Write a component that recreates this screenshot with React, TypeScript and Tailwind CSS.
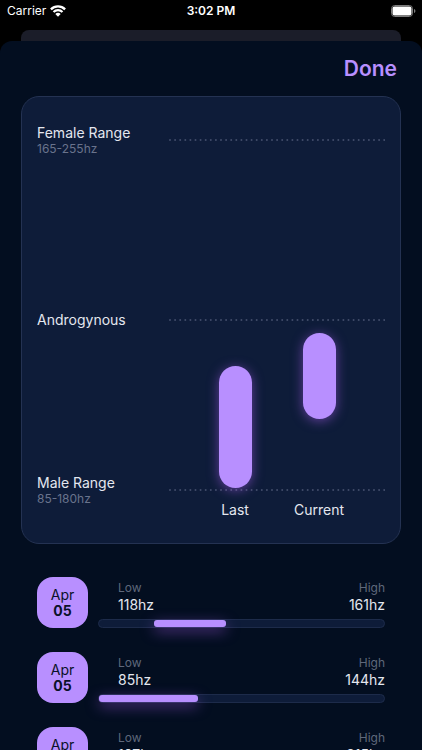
type Range = { low: number; high: number };
type Entry = Range & { month: string; day: string };

const entries: Entry[] = [
  { month: "Apr", day: "05", low: 118, high: 161 },
  { month: "Apr", day: "05", low: 85, high: 144 },
  { month: "Apr", day: "05", low: 107, high: 215 },
];

const MIN_HZ = 85;
const MAX_HZ = 255;

function StatusBar() {
  return (
    <header className="relative flex h-[22px] shrink-0 items-center justify-between pr-[6px] pl-[7px] text-xs leading-4 text-white">
      <div className="flex items-center gap-1">
        <span>Carrier</span>
        <svg width="16" height="12" viewBox="0 0 16 12" fill="none" aria-label="Wi-Fi">
          <path d="M.9 4.300a10.200 10.200 0 0 1 14.200 0" stroke="white" strokeWidth="2.400" />
          <path d="M3.500 7a6.400 6.400 0 0 1 9 0" stroke="white" strokeWidth="2.200" />
          <path d="M8 11.800 5.300 9.100a3.800 3.800 0 0 1 5.400 0Z" fill="white" />
        </svg>
      </div>
      <time className="absolute inset-x-0 text-center font-semibold">3:02 PM</time>
      <svg width="25" height="12" viewBox="0 0 25 12" aria-label="Battery full">
        <rect x="0.5" y="0.5" width="21" height="11" rx="3.2" fill="none" stroke="#7c7c7c" />
        <rect x="1.500" y="1.500" width="19" height="9" rx="2" fill="white" />
        <path d="M23 4v4c.8-.3 1.400-1.100 1.400-2S23.800 4.300 23 4Z" fill="#7c7c7c" />
      </svg>
    </header>
  );
}

function DottedLine() {
  return (
    <svg className="h-[3px] min-w-0 flex-1" aria-hidden="true">
      <line x1="2" y1="1" x2="100%" y2="1" stroke="#414c6a" strokeWidth="2" strokeLinecap="round" strokeDasharray="0 5.1" />
    </svg>
  );
}

function RangeRow({ title, detail }: { title: string; detail?: string }) {
  return (
    <div className="flex items-center">
      <div className="w-[131px] shrink-0">
        <div className="text-sm leading-4 text-[#e4e7ef]">{title}</div>
        {detail && <div className="text-xs leading-[15px] text-[#69738c]">{detail}</div>}
      </div>
      <DottedLine />
    </div>
  );
}

function Bar({ label, top, height }: { label: string; top: number; height: number }) {
  return (
    <div className="relative flex w-[84px] flex-col items-center justify-end">
      <div
        className="absolute w-[33px] rounded-full bg-[#b88fff] shadow-[0_2px_12px_rgba(184,100,255,0.5)]"
        style={{ top, height }}
      />
      <span className="text-sm leading-5 text-[#e4e7ef]">{label}</span>
    </div>
  );
}

function RangeChart() {
  return (
    <section className="relative h-[448px] shrink-0 rounded-[18px] border border-[#243252] bg-[#0e1c39] px-[15px] pt-7">
      <RangeRow title="Female Range" detail="165-255hz" />
      <div className="h-[156px]" />
      <RangeRow title="Androgynous" />
      <div className="h-[147px]" />
      <RangeRow title="Male Range" detail="85-180hz" />
      <div className="absolute top-0 right-[15px] bottom-[23px] left-[147px] flex justify-center">
        <Bar label="Last" top={269} height={122} />
        <Bar label="Current" top={236} height={86} />
      </div>
    </section>
  );
}

function EntryRow({ month, day, low, high }: Entry) {
  const span = MAX_HZ - MIN_HZ;
  const left = ((low - MIN_HZ) / span) * 100;
  const width = ((high - low) / span) * 100;
  return (
    <li className="flex gap-[10px]">
      <div className="flex size-[51px] shrink-0 flex-col items-center justify-center rounded-2xl bg-[#b88fff] text-sm leading-4 text-[#0a1128]">
        <span>{month}</span>
        <span className="font-bold">{day}</span>
      </div>
      <div className="min-w-0 flex-1 pt-[3px]">
        <dl className="flex justify-between pl-5">
          <div>
            <dt className="text-xs leading-[15px] text-[#5f687b]">Low</dt>
            <dd className="text-sm leading-5 text-[#e4e7ef]">{low}hz</dd>
          </div>
          <div className="text-right">
            <dt className="text-xs leading-[15px] text-[#5f687b]">High</dt>
            <dd className="text-sm leading-5 text-[#e4e7ef]">{high}hz</dd>
          </div>
        </dl>
        <div className="mt-1 h-[9px] rounded-full border border-[#1d2b4a] bg-[#0e1c39]">
          <div
            className="h-[7px] rounded-[3px] bg-[#b88fff] shadow-[0_4px_14px_rgba(184,100,255,0.5)]"
            style={{ marginLeft: `${left}%`, width: `${width}%` }}
          />
        </div>
      </div>
    </li>
  );
}

export default function App() {
  return (
    <div className="flex h-screen flex-col overflow-hidden bg-black font-['Inter',sans-serif]">
      <StatusBar />
      <div className="mx-[21px] mt-2 h-[11px] shrink-0 rounded-t-lg bg-[#1b1d29]" />
      <main className="flex min-h-0 flex-1 flex-col overflow-hidden rounded-t-xl bg-[#030e20] px-[21px]">
        <div className="flex h-[55px] shrink-0 items-center justify-end pr-1">
          <button type="button" className="text-[21px] leading-7 font-semibold text-[#b88fff]">Done</button>
        </div>
        <RangeChart />
        <ul className="mt-[33px] flex flex-col gap-6 px-4">
          {entries.map((entry, index) => (
            <EntryRow key={index} {...entry} />
          ))}
        </ul>
      </main>
    </div>
  );
}
